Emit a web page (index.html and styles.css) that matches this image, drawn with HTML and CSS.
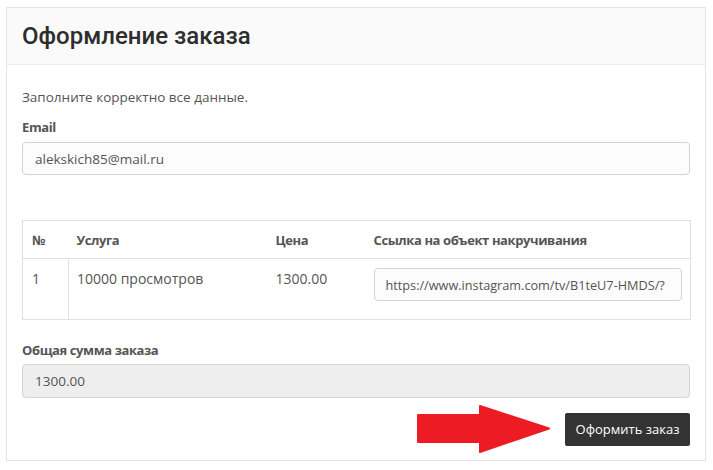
FILE: index.html
```html
<!DOCTYPE html>
<html lang="ru">
<head>
<meta charset="utf-8">
<title>Оформление заказа</title>
<link rel="stylesheet" href="styles.css">
</head>
<body>
<div class="card">
  <div class="card-header">
    <h1 class="title">Оформление заказа</h1>
  </div>
  <div class="card-body">
    <p class="intro">Заполните корректно все данные.</p>
    <label class="label">Email</label>
    <div class="input">alekskich85@mail.ru</div>

    <table class="order">
      <colgroup>
        <col class="w1">
        <col class="w2">
        <col class="w3">
        <col class="w4">
      </colgroup>
      <thead>
        <tr>
          <th>№</th>
          <th>Услуга</th>
          <th>Цена</th>
          <th>Ссылка на объект накручивания</th>
        </tr>
      </thead>
      <tbody>
        <tr>
          <td class="sep">1</td>
          <td>10000 просмотров</td>
          <td>1300.00</td>
          <td class="link"><div class="input">https://www.instagram.com/tv/B1teU7-HMDS/?</div></td>
        </tr>
      </tbody>
    </table>

    <label class="label total-label">Общая сумма заказа</label>
    <div class="input readonly">1300.00</div>

    <div class="actions">
      <svg class="arrow" width="134" height="48" viewBox="0 0 134 48">
        <path d="M2 10 H64 V1 L133 23.5 L64 47 V37 H2 Z" fill="#ed1c24" stroke="#ed1c24" stroke-width="2" stroke-linejoin="round"/>
      </svg>
      <button class="btn">Оформить заказ</button>
    </div>
  </div>
</div>
</body>
</html>
```

FILE: styles.css
```css
* { box-sizing: border-box; }
body {
  margin: 0;
  padding: 7px 7px 0 6px;
  background: #fff;
  font-family: "Open Sans", "Noto Sans", sans-serif;
  font-size: 13.5px;
  line-height: 20px;
  color: #555;
}
.card {
  width: 700px;
  border: 1px solid #dde8e6;
}
.card-header {
  height: 57px;
  background: #fafafa;
  border-bottom: 1px solid #e6ecea;
  padding: 0 15px;
  display: flex;
  align-items: center;
}
.title {
  margin: 0;
  font-family: Roboto, "Noto Sans", sans-serif;
  font-weight: 500;
  font-size: 24px;
  color: #2d2d2d;
  line-height: 30px;
}
.card-body {
  padding: 22px 15px 7px 15px;
}
.intro { margin: 0 0 10px; color: #555; }
.label {
  display: block;
  font-weight: 700;
  font-size: 13px;
  letter-spacing: -0.4px;
  color: #555;
  margin-bottom: 5px;
}
.input {
  height: 33px;
  border: 1px solid #d4d4d4;
  border-radius: 4px;
  background: #fcfcfc;
  padding: 0 12px;
  display: flex;
  align-items: center;
  color: #555;
  white-space: nowrap;
  overflow: hidden;
}
.input.readonly { background: #eee; height: 34px; }
.order {
  width: 668px;
  margin-top: 45px;
  border-collapse: collapse;
  table-layout: fixed;
  border: 1px solid #e0e0e0;
}
.w1 { width: 46px; }
.w2 { width: 199px; }
.w3 { width: 98px; }
.w4 { width: 325px; }
.order th {
  text-align: left;
  font-weight: 700;
  font-size: 13px;
  letter-spacing: -0.4px;
  color: #555;
  height: 38px;
  padding: 0 8px;
  border-bottom: 1px solid #e0e0e0;
}
.order th:first-child, .order td:first-child { padding-left: 9px; }
.order td {
  vertical-align: top;
  padding: 10px 8px 18px 8px;
  height: 61px;
  font-size: 14px;
}
.order td.sep { border-right: 1px solid #e0e0e0; }
.order td.link { padding-top: 9px; font-size: 12.7px; }
.order td.link .input { padding: 0 11px; }
.total-label { margin-top: 20px; margin-bottom: 4px; }
.actions {
  margin-top: 7px;
  display: flex;
  justify-content: flex-end;
  align-items: center;
  gap: 15px;
}
.arrow { display: block; }
.btn {
  height: 33px;
  width: 125px;
  border: 0;
  border-radius: 2px;
  background: #333;
  color: #fff;
  font-family: "Open Sans", "Noto Sans", sans-serif;
  font-size: 13px;
  padding: 0;
}
```
